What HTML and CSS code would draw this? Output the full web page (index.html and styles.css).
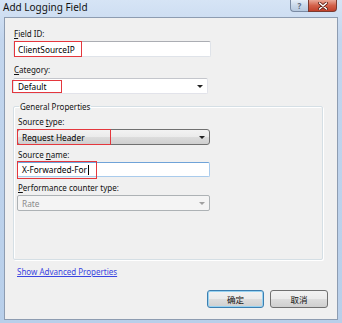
FILE: index.html
```html
<!DOCTYPE html>
<html>
<head>
<meta charset="utf-8">
<link rel="stylesheet" href="styles.css">
</head>
<body>
<div class="window">
  <div class="titlebar">
    <div class="title">Add Logging Field</div>
    <div class="caption-buttons">
      <div class="cap-btn help">?</div>
      <div class="cap-btn close">
        <svg width="10" height="8" viewBox="0 0 10 8"><path d="M1.5 1 L8.5 7 M8.5 1 L1.5 7" stroke="#5a1a10" stroke-width="3" stroke-linecap="round"/><path d="M1.5 1 L8.5 7 M8.5 1 L1.5 7" stroke="#fff" stroke-width="1.6" stroke-linecap="round"/></svg>
      </div>
    </div>
  </div>
  <div class="client">
    <div class="label"><u>F</u>ield ID:</div>
    <div class="textbox w198 mark-wrap">
      <span class="text">ClientSourceIP</span>
      <span class="mark m1"></span>
    </div>
    <div class="label gap7"><u>C</u>ategory:</div>
    <div class="combo w195 mark-wrap">
      <span class="text">Default</span>
      <span class="arrow"></span>
      <span class="mark m2"></span>
    </div>
    <fieldset class="group">
      <legend>General Properties</legend>
      <div class="label">Source <u>t</u>ype:</div>
      <div class="combo list w193 mark-wrap">
        <span class="text">Request Header</span>
        <span class="arrow"></span>
        <span class="mark m3"></span>
      </div>
      <div class="label gap4">Source <u>n</u>ame:</div>
      <div class="textbox focus w193 mark-wrap">
        <span class="text">X-Forwarded-For<span class="caret"></span></span>
        <span class="mark m4"></span>
      </div>
      <div class="label gap5"><u>P</u>erformance counter type:</div>
      <div class="combo disabled w193">
        <span class="text">Rate</span>
        <span class="arrow"></span>
      </div>
    </fieldset>
    <a class="link" href="#">Show Advanced Properties</a>
    <div class="buttons">
      <div class="btn default">确定</div>
      <div class="btn">取消</div>
    </div>
  </div>
</div>
</body>
</html>
```

FILE: styles.css
```css
* { box-sizing: border-box; }
html, body { margin: 0; padding: 0; }
body {
  width: 342px;
  height: 323px;
  overflow: hidden;
  font-family: "Noto Sans", "Noto Sans CJK SC", sans-serif;
  font-size: 8px;
  color: #111;
}
.window {
  width: 342px;
  height: 323px;
  background: linear-gradient(to bottom, #d6e4f5 0px, #c3d6ee 40px, #b8cfea 323px);
  display: flex;
  flex-direction: column;
}
.titlebar {
  height: 17px;
  display: flex;
  justify-content: space-between;
  align-items: flex-start;
}
.title {
  font-size: 10px;
  line-height: 13px;
  padding-left: 3px;
  padding-top: 1px;
  color: #111;
}
.caption-buttons {
  display: flex;
  margin-right: 5px;
}
.cap-btn {
  height: 12px;
  display: flex;
  align-items: center;
  justify-content: center;
  border: 1px solid #7a8aa3;
  border-top: none;
}
.help {
  width: 18px;
  border-radius: 0 0 0 4px;
  background: linear-gradient(to bottom, #e6eef8, #c9d8ea 50%, #b7c9df);
  color: #5d6a7c;
  font-size: 8px;
  font-weight: bold;
  line-height: 10px;
  border-right: none;
}
.close {
  width: 29px;
  border-radius: 0 0 4px 0;
  border-color: #7b3a30;
  background: linear-gradient(to bottom, #e9a898, #d3614a 50%, #c1402a);
}
.client {
  margin: 0 4px;
  height: 303px;
  background: #f0f0f0;
  border: 1px solid #8d9cb1;
  padding: 10px 9px 0 8px;
  display: flex;
  flex-direction: column;
  align-items: flex-start;
}
.label {
  height: 11px;
  line-height: 11px;
  padding-left: 1px;
  margin-bottom: 2px;
  white-space: nowrap;
}
.gap7 { margin-top: 7px; margin-bottom: 3px; }
.gap4 { margin-top: 4px; }
.gap5 { margin-top: 5px; }
u { text-decoration: underline; text-underline-offset: 1px; }
.w198 { width: 198px; }
.w195 { width: 195px; }
.w193 { width: 193px; }
.textbox, .combo {
  height: 16px;
  display: flex;
  align-items: center;
  padding-left: 4px;
  white-space: nowrap;
  font-size: 8.3px;
  color: #000;
}
.textbox {
  background: #fff;
  border: 1px solid #dfe3e9;
  border-top-color: #abadb3;
  border-radius: 2px;
}
.textbox.focus {
  height: 15px;
  border-color: #a9cbec;
  border-top-color: #6fa3d8;
}
.combo {
  position: relative;
  background: #fff;
  border: 1px solid #e2e3ea;
  border-top-color: #c4c6cc;
  border-radius: 2px;
}
.combo.list {
  border: 1px solid #707070;
  border-radius: 3px;
  background: linear-gradient(to bottom, #f3f3f3 0%, #ebebeb 48%, #dcdcdc 52%, #cfcfcf 100%);
}
.combo.disabled {
  background: #f4f4f4;
  border: 1px solid #adb2b5;
  border-radius: 2px;
  color: #8b8b8b;
}
.arrow {
  position: absolute;
  right: 4px;
  top: 6px;
  width: 0;
  height: 0;
  border-left: 3px solid transparent;
  border-right: 3px solid transparent;
  border-top: 3px solid #222;
}
.combo.disabled .arrow { border-top-color: #a0a0a0; }
.caret {
  display: inline-block;
  width: 1px;
  height: 10px;
  background: #000;
  vertical-align: -2px;
  margin-left: 1px;
}
.mark-wrap { position: relative; }
.mark {
  position: absolute;
  border: 1.3px solid #e4373d;
  pointer-events: none;
}
.m1 { left: 0px; top: -1px; width: 68px; height: 16px; }
.m2 { left: -2px; top: 1px; width: 50px; height: 13px; }
.m3 { left: -1px; top: -1px; width: 94px; height: 16px; }
.m4 { left: -1px; top: -2px; width: 80px; height: 18px; }
.group {
  align-self: stretch;
  margin: 7px 5px 0 0;
  padding: 4px 3px 48px 3px;
  border: 1px solid #d5dfe5;
  box-shadow: inset 1px 1px 0 #fff, 1px 1px 0 #fff;
  border-radius: 2px;
  min-width: 0;
}
.group legend {
  padding: 0 1px;
  margin-left: 2px;
  line-height: 11px;
  height: 11px;
}
.link {
  margin-top: 6px;
  margin-left: 4px;
  line-height: 11px;
  color: #3a44e0;
  text-decoration: underline;
  text-underline-offset: 1px;
}
.buttons {
  align-self: stretch;
  margin-top: 13px;
  display: flex;
  justify-content: flex-end;
  gap: 6px;
}
.btn {
  width: 58px;
  height: 18px;
  border: 1px solid #707070;
  border-radius: 3px;
  background: linear-gradient(to bottom, #f2f2f2 0%, #ebebeb 48%, #dddddd 52%, #cfcfcf 100%);
  display: flex;
  align-items: center;
  justify-content: center;
  font-family: "Noto Sans CJK SC", sans-serif;
  font-size: 8.5px;
  color: #111;
}
.btn.default {
  width: 57px;
  border-color: #3c7fb1;
  box-shadow: inset 0 0 0 1px #97d2f1;
}
```
